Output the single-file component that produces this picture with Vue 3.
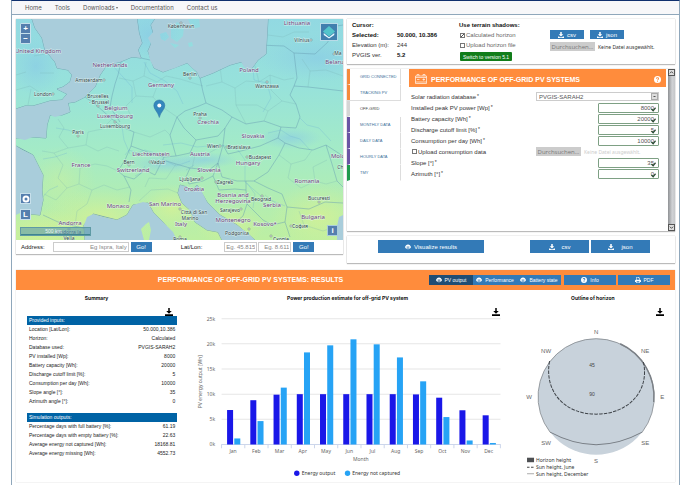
<script setup>
import { ref } from 'vue'

const navItems = ['Home', 'Tools', 'Downloads', 'Documentation', 'Contact us']

const countries = [
  ['United Kingdom', 38, 53], ['Netherlands', 110, 67], ['Germany', 161, 87], ['Belgium', 116, 110],
  ['Luxembourg', 115, 118], ['Czechia', 208, 124], ['Poland', 249, 72], ['Lithuania', 297, 25],
  ['Belarus', 336, 64], ['France', 81, 167], ['Liechtenstein', 151, 156], ['Switzerland', 133, 172],
  ['Monaco', 118, 208], ['San Marino', 165, 206], ['Andorra', 70, 225], ['Slovakia', 253, 138],
  ['Austria', 200, 156], ['Hungary', 248, 165], ['Slovenia', 209, 172], ['Croatia', 194, 191],
  ['Romania', 307, 183], ['Bosnia and', 233, 197], ['Herzegovina', 233, 203], ['Serbia', 272, 207],
  ['Montenegro', 233, 222], ['Kosovo*', 265, 226], ['Bulgaria', 313, 219], ['Italy', 181, 226],
  ['Moldova', 343, 158]
]
const cities = [
  ['København', 181, 28, 181, 23], ['Amsterdam', 89, 82, 104, 80], ['London', 43, 96, 53, 94],
  ['Bruxelles', 98, 98, 0, 0], ['- Brussel', 99, 104, 98, 106], ['Luxembourg', 115, 128, 115, 122],
  ['Berlin', 190, 76, 190, 78], ['Praha', 200, 116, 200, 118], ['Warszawa', 267, 88, 267, 82],
  ['Vilnius', 302, 42, 311, 40], ['Paris', 78, 134, 78, 136], ['Bern', 129, 164, 129, 165],
  ['Vaduz', 158, 164, 150, 162], ['Wien', 213, 148, 220, 146], ['Bratislava', 239, 149, 227, 147],
  ['Budapest', 260, 159, 247, 157], ['Ljubljana', 190, 181, 202, 178], ['Zagreb', 225, 184, 216, 182],
  ['Beograd', 261, 201, 262, 196], ['Sarajevo', 230, 212, 241, 209], ['Podgorica', 237, 235, 249, 229],
  ['Bucuresti', 319, 200, 319, 202], ['София', 300, 228, 291, 226], ['Città di San', 194, 214, 180, 209],
  ['Marino', 190, 220, 0, 0], ['Скопје', 281, 241, 271, 236], ['Andorra la', 69, 234, 69, 229],
  ['Vella', 69, 240, 0, 0], ['Roma', 180, 241, 180, 237], ['Chi', 341, 169, 0, 0], ['Ma', 338, 55, 334, 54]
]

const tabs = [
  { name: 'GRID CONNECTED', tone: 'orange' }, { name: 'TRACKING PV', tone: 'orange' },
  { name: 'OFF-GRID', tone: 'grey' }, { name: 'MONTHLY DATA', tone: 'purple' },
  { name: 'DAILY DATA', tone: 'purple' }, { name: 'HOURLY DATA', tone: 'purple' },
  { name: 'TMY', tone: 'green' }
]
const activeTab = ref('OFF-GRID')

const powerFields = ref([
  { id: 'peak', label: 'Installed peak PV power [Wp]', value: '8000' },
  { id: 'battery', label: 'Battery capacity [Wh]', value: '20000' },
  { id: 'cutoff', label: 'Discharge cutoff limit [%]', value: '5' },
  { id: 'consumption', label: 'Consumption per day [Wh]', value: '10000' }
])
const angleFields = ref([
  { id: 'slope', label: 'Slope [°]', value: '35' },
  { id: 'azimuth', label: 'Azimuth [°]', value: '0' }
])

const provided = [
  ['Location [Lat/Lon]:', '50.000,10.386'], ['Horizon:', 'Calculated'], ['Database used:', 'PVGIS-SARAH2'],
  ['PV installed [Wp]:', '8000'], ['Battery capacity [Wh]:', '20000'], ['Discharge cutoff limit [%]:', '5'],
  ['Consumption per day [Wh]:', '10000'], ['Slope angle [°]:', '35'], ['Azimuth angle [°]:', '0']
]
const simulated = [
  ['Percentage days with full battery [%]:', '61.19'], ['Percentage days with empty battery [%]:', '22.63'],
  ['Average energy not captured [Wh]:', '18168.81'], ['Average energy missing [Wh]:', '4552.73']
]

const months = [
  ['Jan', 6.85, 1.2], ['Feb', 8.8, 4.65], ['Mar', 9.9, 11.3], ['Apr', 10, 18.3], ['May', 10, 19.7], ['Jun', 10, 20.9],
  ['Jul', 10, 19.9], ['Aug', 10, 17.3], ['Sep', 9.95, 12.55], ['Oct', 9.3, 5.45], ['Nov', 6.8, 0.8], ['Dec', 5.8, 0.3]
]
const baseY = 444.3
const perK = 5.025
const step = 23.2
const ticks = [0, 5, 10, 15, 20, 25]
</script>

<template>
  <div class="page">
    <nav class="nav">
      <a v-for="n in navItems" :key="n" href="#">{{ n }}<span v-if="n === 'Downloads'" class="caret"></span></a>
    </nav>

    <svg class="defs" aria-hidden="true">
      <symbol id="dl" viewBox="0 0 16 16"><path d="M6 0h4v6h4L8 12 2 6h4zM0 12h3l2 2h6l2-2h3v4H0z" /></symbol>
      <symbol id="save" viewBox="0 0 16 16"><path d="M6.500 0h3v6h4L8 11.500 2.500 6h4zM0 12.500h16V16H0z" /></symbol>
      <symbol id="eye" viewBox="0 0 16 16"><path fill-rule="evenodd" d="M8 1C4 1 1 4.500 0 8c1 3.500 4 6 8 6s7-2.500 8-6c-1-3.500-4-7-8-7zM5 5.500a3.300 3.300 0 1 0 6 0l-1.500 1.500h-3zM8 11.500c-3 0-5-1.500-6-3.500 1 3 3 5 6 5s5-2 6-5c-1 2-3 3.500-6 3.500z" /></symbol>
      <symbol id="check" viewBox="0 0 16 16"><path d="M0 8l3-3 3.500 4L13 1l3 3-9 11z" /></symbol>
      <symbol id="help" viewBox="0 0 16 16"><path fill-rule="evenodd" d="M8 0a8 8 0 1 0 0 16A8 8 0 0 0 8 0zM4.500 6C4.500 1.800 11.500 1.800 11.500 6c0 2-2.500 2.300-2.500 4H7c0-2.500 2.500-2.700 2.500-4S6.500 4.500 6.500 6zM7 11.200h2v2H7z" /></symbol>
      <symbol id="print" viewBox="0 0 16 16"><path fill-rule="evenodd" d="M4 0h6l2.500 2.500V7H14l2 2v4h-3v3H3v-3H0V9l2-2h1.500V0zM5 1.500V7h6V3.500H9v-2zM4.500 11v3.500h7V11z" /></symbol>
    </svg>

    <main class="main">
      <div class="top">
        <section class="map-card">
          <div class="map">
            <svg class="map-art" viewBox="16 19 327 221" role="img" aria-label="Map of Europe">
              <defs>
                <linearGradient id="land" x1="0" y1="19" x2="0" y2="240" gradientUnits="userSpaceOnUse">
                  <stop offset="0" stop-color="#92d9e2" /><stop offset=".3" stop-color="#97e2db" />
                  <stop offset=".6" stop-color="#a4ebc6" /><stop offset="1" stop-color="#bdefa2" />
                </linearGradient>
                <radialGradient id="warm"><stop offset="0" stop-color="#daf291" stop-opacity=".7" /><stop offset="1" stop-color="#d4f193" stop-opacity="0" /></radialGradient>
                <radialGradient id="cool"><stop offset="0" stop-color="#88c9e6" stop-opacity=".6" /><stop offset="1" stop-color="#8ccde6" stop-opacity="0" /></radialGradient>
                <clipPath id="shore">
                  <path d="M16 19H32L35 28 42 38 45 50 55 62 57 68 68 70 72 75 70 82 63 87 57 89 63 92 67 94 62 100 50 101 40 104 33 106 25 106 16 109Z" />
                  <path d="M137 19L139 33 142 43 138 50 141 58 132 57 120 62 107 65 100 75 95 87 85 97 75 102 68 103 70 112 62 115 55 117 50 115 47 125 46 138 33 137 25 140 16 138V146L22 150 33 155 38 165 43 175 42 190 43 200 40 215 20 213 16 215V240H85L84 225 87 217 93 214 103 217 117 220 127 215 133 205 143 202 148 203 153 212 163 222 173 232 177 240H222L218 232 207 230 195 222 190 210 182 203 178 193 180 185 187 187 192 192 197 185 202 192 207 202 220 215 237 225 250 235 255 240H337V226L339 217 343 215V19H268L266 54 258 60 250 71 245 68 241 62 230 65 213 73 200 78 197 72 191 67 187 63 175 68 163 72 154 68 150 60 148 51 151 44 148 38 153 32 151 25 155 19Z" />
                  <path d="M160 34L166 32 169 37 165 41 161 39ZM171 28L177 22 184 27 183 36 177 42 171 38ZM170 43L179 45 175 48ZM188 19H199L200 27 192 29ZM188 43L192 42 193 46 189 47ZM146 224L149 222 151 230 149 240H144L141 229Z" />
                </clipPath>
              </defs>
              <rect x="16" y="19" width="327" height="221" fill="#a9cddb" />
              <g clip-path="url(#shore)">
                <rect x="16" y="19" width="327" height="221" fill="url(#land)" />
                <ellipse cx="36" cy="66" rx="26" ry="30" fill="url(#cool)" />
                <ellipse cx="150" cy="35" rx="30" ry="25" fill="url(#cool)" />
                <ellipse cx="167" cy="164" rx="42" ry="10" fill="url(#cool)" />
                <ellipse cx="205" cy="160" rx="34" ry="8" fill="url(#cool)" />
                <ellipse cx="290" cy="138" rx="32" ry="11" fill="url(#cool)" />
                <ellipse cx="318" cy="58" rx="60" ry="24" fill="url(#cool)" />
                <ellipse cx="100" cy="218" rx="60" ry="30" fill="url(#warm)" />
                <ellipse cx="40" cy="232" rx="50" ry="24" fill="url(#warm)" />
                <ellipse cx="172" cy="208" rx="36" ry="24" fill="url(#warm)" />
                <ellipse cx="230" cy="225" rx="36" ry="20" fill="url(#warm)" />
                <ellipse cx="320" cy="216" rx="50" ry="34" fill="url(#warm)" />
                <ellipse cx="60" cy="180" rx="36" ry="34" fill="url(#warm)" opacity=".5" />
                <path class="shoreline" d="M32 19L35 28 42 38 45 50 55 62 57 68 68 70 72 75 70 82 63 87 57 89 63 92 67 94 62 100 50 101 40 104 33 106 25 106 16 109M137 19L139 33 142 43 138 50 141 58 132 57 120 62 107 65 100 75 95 87 85 97 75 102 68 103 70 112 62 115 50 115 47 125 46 138 33 137 16 138M16 146L33 155 38 165 43 175 42 190 43 200 40 215 20 213M85 240L84 225 93 214 117 220 127 215 133 205 148 203 153 212 163 222 177 240M222 240L218 232 207 230 195 222 190 210 182 203 178 193 180 185 187 187 192 192 197 185 207 202 220 215 237 225 255 240M268 19L266 54 258 60 250 71 241 62 230 65 213 73 200 78 197 72 187 63 163 72 154 68 148 51 151 44 153 32 151 25 155 19" />
                <path class="border" d="M85 97L95 104 104 112 112 119 122 127 134 132 131 146 125 160 118 171 124 176 131 190 129 202M121 62L118 75 115 84 112 96 110 107 120 122M141 58L150 60M200 78L203 92 206 103 199 106 185 111 177 117 184 128 196 140 190 153 176 156 164 157 150 153 131 146M206 103L222 110 232 117 225 128 218 136 196 140M232 117L246 124 264 121 281 127 296 128 300 117 296 104 290 95 294 86 297 78 294 53 284 46 258 45M225 128L223 145 228 154 241 151 260 146 278 138 281 127M223 145L218 163 209 170 190 168 176 164 163 160M218 163L222 177 237 181 254 181 268 172 279 155 285 143 278 138M190 168L186 177 189 184 203 181 213 176 218 163M213 176L219 190 235 189 246 190 246 181M246 190L247 204 243 216 236 222M247 204L256 213 263 220 272 225 285 222 287 207 282 194 268 188 254 181M287 207L309 209 325 202 343 203M285 222L290 237M285 143L299 148 313 150 326 145 343 156M326 145L332 164 337 181 343 187M294 53L315 54 328 42 330 27 343 25M294 86L308 87 326 89 343 91M43 215L58 222 74 226 88 229M124 176L134 179 145 170 155 175 164 157M177 117L170 135 176 156" />
                <path class="region" d="M58 119L64 128 59 137 68 148 54 153 42 151M68 148L86 145 98 151 107 147 119 151M86 145L88 132 102 129 112 119M54 153L63 165 58 178 67 188 79 184 92 190 104 185 117 190 130 187M44 194L56 200 67 188M79 184L80 168 95 164 107 166 118 171M92 190L87 204 77 211 75 226M119 78L133 81 144 76 157 82 166 76 180 79 203 86M133 81L136 96 126 106 132 118M144 76L146 62M136 96L153 97 161 106 177 117M153 97L158 84M134 132L150 137 165 130 170 135M206 86L222 82 235 88 246 81 259 82 270 75 284 80 294 78M235 88L236 105 246 124M222 82L220 67M259 82L255 66M236 105L257 105 268 111 264 121M268 111L282 101 296 104M270 75L271 90 282 101M279 155L291 164 288 178 301 188 315 181 326 184 337 181M291 164L305 160 312 150M315 181L313 167 327 160M139 201L151 190 168 189 178 193M145 187L149 178 166 179 176 164M16 90L30 86 39 92M40 73L54 73M34 56L45 54M16 75L26 72M28 105L31 89M302 59L310 71 326 70 343 76M310 71L308 87M268 35L283 37 294 32 309 32M299 211L304 225 323 231 337 226M265 195L276 204M192 168L195 155 209 153 223 145" />
                <path class="river" d="M122 127L124 140 130 154M144 62L150 73 165 81 177 91 183 104M253 69L254 80 267 83 271 98 263 112M222 145L238 150 245 160 245 182 261 196 285 206M163 145L181 143 197 147 221 145M79 134L68 130 56 128M67 153L55 157 43 159M113 66L123 77 132 87 132 103M58 186L49 190 42 198M300 118L307 125 319 128 331 141M268 133L281 130 290 136 300 139 310 150M186 170L194 165M156 165L166 161 176 166 190 161M145 166L141 173 135 176M125 155L129 150 137 153 145 150 155 153M253 208L255 194 247 183" />
              </g>
              <g class="country"><text v-for="c in countries" :key="c[0]" :x="c[1]" :y="c[2]">{{ c[0] }}</text></g>
              <g class="city">
                <template v-for="c in cities" :key="c[0]">
                  <circle v-if="c[3]" :cx="c[3]" :cy="c[4]" r="1" />
                  <text :x="c[1]" :y="c[2]">{{ c[0] }}</text>
                </template>
              </g>
              <path d="M159.300 117.500C158 112 153.800 109.500 153.800 105.500a5.500 5.500 0 0 1 11 0c0 4-4.200 6.500-5.500 12z" fill="#3387bd" stroke="#2c6f9f" stroke-width=".5" />
              <circle cx="159.300" cy="105.500" r="2" fill="#fff" />
            </svg>
            <div class="zoomer">
              <button type="button" aria-label="Zoom in">+</button>
              <button type="button" aria-label="Zoom out">−</button>
            </div>
            <button type="button" class="layers" aria-label="Layers">
              <svg viewBox="0 0 16 16"><path d="M2 9l6 5 6-5v2.500l-6 4-6-4z" fill="#e8fbff" /><path d="M8 1l7 6.500-7 5.500-7-5.500z" fill="#53c4cb" /></svg>
            </button>
            <div class="tools">
              <button type="button" aria-label="Show horizon"><svg viewBox="0 0 8 8"><circle cx="4" cy="4" r="2.500" /></svg></button>
              <button type="button">L</button>
            </div>
            <div class="scale">500 km</div>
            <button type="button" class="credit">i</button>
          </div>
          <form class="locate" @submit.prevent>
            <label for="address">Address:</label>
            <input id="address" class="addr" type="text" placeholder="Eg Ispra, Italy" />
            <button class="blue go" type="submit">Go!</button>
            <label for="lat" class="latlon">Lat/Lon:</label>
            <input id="lat" class="coord" type="text" placeholder="Eg. 45.815" />
            <input id="lon" class="coord lon" type="text" placeholder="Eg. 8.611" aria-label="Longitude" />
            <button class="blue go" type="submit">Go!</button>
          </form>
        </section>

        <div class="side">
          <section class="card cursor">
            <dl class="facts">
              <dt><b>Cursor:</b></dt><dd></dd>
              <dt><b>Selected:</b></dt><dd><b>50.000, 10.386</b></dd>
              <dt>Elevation (m):</dt><dd>244</dd>
              <dt>PVGIS ver.</dt><dd><b>5.2</b></dd>
            </dl>
            <div class="terrain">
              <b>Use terrain shadows:</b>
              <label class="tick"><input type="checkbox" checked />Calculated horizon</label>
              <label class="tick"><input type="checkbox" />Upload horizon file</label>
              <button type="button" class="switch">Switch to version 5.1</button>
            </div>
            <div class="files">
              <div class="pair">
                <button type="button" class="blue"><svg class="ico"><use href="#dl" /></svg>csv</button>
                <button type="button" class="blue"><svg class="ico"><use href="#dl" /></svg>json</button>
              </div>
              <div class="upload"><button type="button" class="browse">Durchsuchen...</button><span>Keine Datei ausgewählt.</span></div>
            </div>
          </section>

          <section class="card panel">
            <div class="tabs" role="tablist">
              <button v-for="t in tabs" :key="t.name" type="button" role="tab" :class="[t.tone, { active: t.name === activeTab }]" @click="activeTab = t.name">{{ t.name }}</button>
            </div>
            <form class="form" @submit.prevent>
              <header class="form-head">
                <svg class="battery" viewBox="0 0 24 20" fill="none" stroke="#fff" stroke-width="1.300"><path d="M1 4h22v15H1zM4 4V1h4v3M16 4V1h4v3M1 7h22M4 11h5M15 11h5M17.500 8.500v5M1 16h22" /></svg>
                <h2>PERFORMANCE OF OFF-GRID PV SYSTEMS</h2>
                <svg class="help"><use href="#help" /></svg>
              </header>
              <div class="fields">
                <div class="row">
                  <label for="db">Solar radiation database<sup>*</sup></label>
                  <div class="ctl select"><select id="db"><option>PVGIS-SARAH2</option></select><span class="arrow"></span></div>
                </div>
                <div v-for="f in powerFields" :key="f.id" class="row">
                  <label :for="f.id">{{ f.label }}<sup>*</sup></label>
                  <div class="ctl num"><input :id="f.id" v-model="f.value" type="text" /><svg class="ok"><use href="#check" /></svg></div>
                </div>
                <div class="row">
                  <label class="tick dark"><input type="checkbox" />Upload consumption data</label>
                  <div class="ctl upload faded"><button type="button" class="browse">Durchsuchen...</button><span>Keine Datei ausgewählt.</span></div>
                </div>
                <div v-for="f in angleFields" :key="f.id" class="row">
                  <label :for="f.id">{{ f.label }}<sup>*</sup></label>
                  <div class="ctl num"><input :id="f.id" v-model="f.value" type="text" /><svg class="ok"><use href="#check" /></svg></div>
                </div>
              </div>
            </form>
            <div class="scroller">
              <button type="button" aria-label="Scroll up"><svg viewBox="0 0 6 6"><path d="M1 4l2-2 2 2" /></svg></button>
              <button type="button" aria-label="Scroll down"><svg viewBox="0 0 6 6"><path d="M1 2l2 2 2-2" /></svg></button>
            </div>
          </section>

          <section class="card actions">
            <button type="button" class="blue visualize"><svg class="ico"><use href="#eye" /></svg>Visualize results</button>
            <div class="exports">
              <button type="button" class="blue"><svg class="ico"><use href="#dl" /></svg>csv</button>
              <button type="button" class="blue"><svg class="ico"><use href="#dl" /></svg>json</button>
            </div>
          </section>
        </div>
      </div>

      <section class="results">
        <header class="banner">
          <h2>PERFORMANCE OF OFF-GRID PV SYSTEMS: RESULTS</h2>
          <div class="views">
            <button type="button" class="blue on"><svg class="ico"><use href="#eye" /></svg>PV output</button>
            <button type="button" class="blue"><svg class="ico"><use href="#eye" /></svg>Performance</button>
            <button type="button" class="blue"><svg class="ico"><use href="#eye" /></svg>Battery state</button>
          </div>
          <button type="button" class="blue extra"><svg class="ico"><use href="#help" /></svg>Info</button>
          <button type="button" class="blue extra"><svg class="ico"><use href="#print" /></svg>PDF</button>
        </header>

        <div class="grid">
          <section class="summary">
            <h3>Summary</h3>
            <button type="button" class="save" aria-label="Download summary"><svg><use href="#save" /></svg></button>
            <table>
              <thead><tr><th colspan="2">Provided inputs:</th></tr></thead>
              <tbody><tr v-for="r in provided" :key="r[0]"><td>{{ r[0] }}</td><td>{{ r[1] }}</td></tr></tbody>
            </table>
            <table>
              <thead><tr><th colspan="2">Simulation outputs:</th></tr></thead>
              <tbody><tr v-for="r in simulated" :key="r[0]"><td>{{ r[0] }}</td><td>{{ r[1] }}</td></tr></tbody>
            </table>
          </section>

          <section class="chart">
            <h3>Power production estimate for off-grid PV system</h3>
            <button type="button" class="save" aria-label="Download chart"><svg><use href="#save" /></svg></button>
            <svg class="plot" viewBox="184 316 326 166">
              <g v-for="t in ticks" :key="t">
                <line x1="221.500" x2="500" :y1="baseY - t * perK" :y2="baseY - t * perK" :stroke="t ? '#e6e6e6' : '#ccd6eb'" />
                <text class="axis" x="215" :y="baseY - t * perK + 2" text-anchor="end">{{ t }}k</text>
              </g>
              <path d="M221.500 444v4" stroke="#ccd6eb" />
              <g v-for="(m, i) in months" :key="m[0]">
                <rect :x="227 + i * step" :y="baseY - m[1] * perK" width="6" :height="m[1] * perK" fill="#1a17e8" />
                <rect :x="234.200 + i * step" :y="baseY - m[2] * perK" width="6" :height="m[2] * perK" fill="#26a3f5" />
                <line :x1="221.500 + (i + 1) * step" :x2="221.500 + (i + 1) * step" y1="444" y2="448" stroke="#ccd6eb" />
                <text class="axis" :x="233 + i * step" y="452.500" text-anchor="middle">{{ m[0] }}</text>
              </g>
              <text class="axis" x="360.500" y="461" text-anchor="middle">Month</text>
              <text class="axis" transform="translate(201.500 381.500) rotate(-90)" text-anchor="middle">PV energy output [Wh]</text>
              <circle cx="296.600" cy="473" r="2.700" fill="#1a17e8" />
              <text class="legend" x="301.500" y="475">Energy output</text>
              <circle cx="347.300" cy="473" r="2.700" fill="#26a3f5" />
              <text class="legend" x="352" y="475">Energy not captured</text>
            </svg>
          </section>

          <section class="horizon">
            <h3>Outline of horizon</h3>
            <button type="button" class="save" aria-label="Download horizon"><svg><use href="#save" /></svg></button>
            <svg class="plot" viewBox="510 316 164 166">
              <circle cx="595" cy="396.500" r="58" fill="#c8d2db" />
              <path d="M549 432A58 58 0 1 1 641 432" fill="none" stroke="#85898e" stroke-width=".8" />
              <path d="M619 343.700A58 58 0 0 1 652.500 402" fill="none" stroke="#7b8086" stroke-width="1.400" />
              <path d="M548.500 361C543 390 562 414 595 414S649 390 642 361" fill="none" stroke="#3e4348" stroke-dasharray="3.500 1.200" />
              <path d="M549 432Q595 457 641 432" fill="none" stroke="#777d84" />
              <g class="compass">
                <text x="595" y="334">N</text><text x="545" y="353">NW</text><text x="644" y="353">NE</text>
                <text x="528" y="399">W</text><text x="661" y="399">E</text><text x="545" y="445">SW</text>
                <text x="644" y="445">SE</text><text x="595" y="463">S</text>
              </g>
              <g class="deg"><text x="591" y="367">45</text><text x="591" y="396">90</text></g>
              <rect x="526" y="457.500" width="7" height="4.500" fill="#4d4f52" />
              <path d="M526 467h2.500M530 467h2.500" stroke="#444" /><path d="M526 473.500h7" stroke="#888" stroke-width=".7" />
              <text class="legend" x="535" y="462">Horizon height</text>
              <text class="legend" x="535" y="469">Sun height, June</text>
              <text class="legend" x="535" y="475.500">Sun height, December</text>
            </svg>
          </section>
        </div>
      </section>
    </main>
  </div>
</template>

<style>
body { background: #fff; }
</style>

<style scoped>
* { box-sizing: border-box; }
.page { margin: 0 10px 0 11px; min-height: 100vh; border: 1px solid #8fa7bb; border-top: 1px solid #10306e; border-bottom: 0; font: 6px/8px "Liberation Sans", Arial, sans-serif; color: #333; background: #fff; }
.defs { display: none; }
button, input, select { font: inherit; color: inherit; margin: 0; padding: 0; border: 0; border-radius: 0; }
button { cursor: pointer; white-space: nowrap; display: flex; align-items: center; justify-content: center; }
h2, h3, dl, dd { margin: 0; }
b { color: #111; }
.nav { display: flex; gap: 14px; height: 14px; align-items: center; padding-left: 13px; background: #f7f7f9; border-bottom: 1px solid #8fa7bb; }
.nav a { color: #555; text-decoration: none; font-family: Inter, sans-serif; }
.nav a { gap: 12px; }
.nav { gap: 13px; }
.caret { display: inline-block; margin-left: 1px; vertical-align: middle; border: 1px solid transparent; border-top: 2px solid #666; border-bottom: 0; }
.main { padding: 4px; }
.top { display: grid; grid-template-columns: 327fr 328fr; gap: 4px; align-items: start; }

.map-card, .card { background: #fff; box-shadow: 0 1px 1px #bbb, 0 0 1px #aaa; }
.map { position: relative; }
.map-art { display: block; width: 100%; }
.shoreline { fill: none; stroke: #7ba7b5; stroke-width: 1; }
.border { fill: none; stroke: #6a9fb4; stroke-width: .6; opacity: .8; stroke-linejoin: round; }
.region { fill: none; stroke: #78afb4; stroke-width: .5; opacity: .5; }
.river { fill: none; stroke: #6aaed4; stroke-width: .6; opacity: .45; }
.country, .city { text-anchor: middle; font-family: "Noto Sans", sans-serif; paint-order: stroke; stroke: #e8f8f5; stroke-opacity: .7; stroke-width: 1px; }
.country { font-size: 6px; fill: #6d3f7a; }
.city { font-size: 5px; fill: #2f3f45; }
.city circle { fill: #b9c7c4; stroke: #444; stroke-width: .5; stroke-opacity: 1; }
.zoomer, .tools, .layers, .scale, .credit { position: absolute; }
.zoomer { left: 4px; top: 4px; display: grid; gap: 1px; padding: 1px; background: #c7e0eb; border-radius: 2px; }
.zoomer button, .tools button, .credit { width: 9px; height: 9px; background: #557fae; color: #fff; font-weight: bold; font-size: 8px; }
.layers { right: 5px; top: 4px; width: 18px; height: 18px; background: #417fae; border: 1px solid #b9dbe8; }
.layers svg { width: 14px; height: 14px; }
.tools { left: 4px; bottom: 20px; display: grid; gap: 5px; }
.tools button { width: 11px; height: 11px; border: 1px solid #c7e0eb; }
.tools svg { width: 8px; height: 8px; fill: none; stroke: #fff; stroke-width: 2; }
.scale { left: 4px; bottom: 4px; width: 71px; height: 9px; padding-right: 4px; text-align: center; color: #e8f4f5; font-size: 5px; line-height: 7px; border: 1px solid #5e9aa5; background: #5c99ad99; box-shadow: inset 0 -1px #3f8490; }
.credit { right: 5px; bottom: 4px; width: 11px; height: 11px; border: 1px solid #a9cddb; }
.locate { display: flex; align-items: center; height: 14px; padding: 0 4px 1px 5px; }
.locate label { color: #222; }
.locate input { height: 10px; min-width: 0; border: 1px solid #ccc; text-align: right; padding-right: 1px; }
.locate input::placeholder { color: #888; opacity: 1; }
.addr { width: 76px; margin: 0 2px 0 8px; }
.coord { width: 33px; margin-right: 1px; }
.latlon { margin: 0 22px 0 29px; }
.lon { margin-right: 2px; }
.blue { background: #337ab7; color: #fff; gap: 3px; }
.go { width: 21px; height: 10px; }
.ico { width: 6px; height: 6px; fill: currentColor; flex: none; }

.side { display: grid; gap: 5px; }
.card { min-width: 0; }
.cursor { display: grid; grid-template-columns: 107fr 91fr 125fr; height: 45px; padding: 1px 0 0 5px; }
.facts { display: grid; grid-template-columns: 45px 1fr; grid-auto-rows: 10px; line-height: 10px; }
.terrain { display: grid; grid-auto-rows: 10px; line-height: 10px; justify-items: start; }
.tick { display: flex; align-items: center; color: #666; }
.tick.dark { color: #333; }
.tick input { appearance: none; width: 5px; height: 5px; border: 1px solid #777; background: #fff; margin: 0 1px 0 1px; }
.tick input:checked { background: linear-gradient(135deg, #fff 40%, #555 40%, #555 60%, #fff 60%); }
.switch { height: 9px; margin: 2px 0 0 1px; padding: 0 3px; background: #117d1a; color: #fff; font-size: 5px; border-radius: 1px; }
.files { padding: 10px 0 0 0; display: grid; gap: 3px; align-content: start; }
.pair { display: flex; gap: 6px; }
.pair button { width: 34px; height: 9px; }
.upload { display: flex; align-items: center; gap: 3px; font-size: 5px; font-family: "Noto Sans", sans-serif; white-space: nowrap; color: #333; }
.browse { width: 45px; height: 9px; background: #ccc; color: #777; font-size: 6px; font-family: "Open Sans", sans-serif; }
.faded { color: #ccc; }

.panel { display: flex; min-height: 162px; }
.tabs { width: 54px; flex: none; }
.tabs button { width: 100%; height: 16px; justify-content: flex-start; padding-left: 10px; font: 4px/6px "Liberation Sans", sans-serif; color: #3a6e98; background: #fff; border-left: 3px solid; border-right: 1px solid #ddd; border-bottom: 1px solid #fff; }
.tabs .orange { border-left-color: #f58a3c; }
.tabs .grey { border-left-color: #d5d5d5; }
.tabs .purple { border-left-color: #6b55a5; }
.tabs .green { border-left-color: #1f9a4d; }
.tabs .active { color: #444; border-right-color: #fff; box-shadow: 0 -1px #ddd, 0 1px #ddd; }
.form { flex: 1; min-width: 0; margin-left: 8px; }
.form-head { display: flex; align-items: center; height: 18px; padding: 2px 5px 0 6px; background: #ff8c3c; color: #fff; }
.battery { width: 12px; height: 10px; margin-right: 4px; }
.form-head h2, .banner h2 { font: bold 7px/9px "Liberation Sans", Arial, sans-serif; white-space: nowrap; }
.help { width: 7px; height: 7px; margin-left: auto; fill: #fff; }
.fields { padding: 4px 7px 0 2px; }
.row { display: grid; grid-template-columns: 125fr 123fr; height: 11px; align-items: center; }
sup { font-size: 5px; line-height: 1px; vertical-align: 1px; margin-left: 1px; }
.ctl { position: relative; }
.select select { display: block; width: 100%; height: 9px; appearance: none; border: 1px solid #ccc; background: #fff; padding-left: 2px; color: #555; }
.arrow { position: absolute; right: 1px; top: 1px; width: 7px; height: 7px; background: #ddd; border: 1px solid #aaa; pointer-events: none; }
.arrow::after { content: ""; display: block; margin: 2px 1px; border: 1px solid transparent; border-top-color: #555; }
.num { display: flex; justify-content: flex-end; }
.num input { width: 61px; height: 10px; border: 1px solid #7ea084; border-radius: 1px; text-align: right; padding-right: 4px; color: #555; background: #fff; }
.ok { position: absolute; right: 3px; top: 4px; width: 5px; height: 5px; fill: #2c4c33; }
.scroller { width: 7px; flex: none; margin-left: 2px; display: flex; flex-direction: column; justify-content: space-between; background: linear-gradient(90deg, #8f9194, #d0d2d5 60%, #c4c6c9); }
.scroller button { width: 7px; height: 7px; background: #ddd; border: 1px solid #555; }
.scroller svg { width: 5px; height: 5px; fill: none; stroke: #333; }

.actions { display: flex; justify-content: space-between; height: 27px; padding: 4px 25px 10px 31px; }
.visualize { width: 106px; }
.exports { display: flex; gap: 2px; }
.exports button { width: 59px; gap: 7px; }

.results { margin-top: 7px; box-shadow: 0 0 1px #bbb; }
.banner { display: flex; align-items: center; height: 20px; padding: 0 5px 0 0; background: #ff8c3c; color: #fff; }
.banner h2 { flex: 1; text-align: center; padding: 0 0 2px 56px; }
.banner button { height: 10px; }
.views { display: flex; margin-right: 3px; }
.views button { width: 44px; }
.views .on { background: #204d74; }
.banner .extra { width: 52px; }
.banner .extra + .extra { margin-left: 2px; }
.banner .blue { font-size: 5px; }
.grid { display: grid; grid-template-columns: 161fr 333fr 164fr; }
h3 { padding-top: 4px; font: bold 5px/9px Inter, sans-serif; color: #111; text-align: center; }
.save { display: block; background: none; margin: 5px 4px 0 auto; height: 8px; color: #000; }
.save svg { display: block; width: 8px; height: 8px; fill: #000; }
.chart { padding-left: 7px; }
.chart .save, .horizon .save { margin-right: 11px; }
.plot { display: block; width: 100%; }
.axis { font: 5px "Noto Sans", sans-serif; fill: #666; }
.legend { font: 5px "Noto Sans", sans-serif; fill: #333; }
.compass { font: 6px "Liberation Sans", sans-serif; fill: #666; text-anchor: middle; }
.deg { font: 5px "Liberation Sans", sans-serif; fill: #444; text-anchor: middle; }
.summary table { width: calc(100% - 11px); margin: 0 0 4px 11px; border-collapse: collapse; font-size: 5px; line-height: 9px; color: #222; }
.summary table + table { margin-top: 7px; }
.summary th { background: #0063a5; color: #fff; font-weight: normal; text-align: left; padding: 0 2px; height: 9px; }
.summary td { padding: 0 2px; height: 9px; }
.summary td:last-child { text-align: right; }
</style>
